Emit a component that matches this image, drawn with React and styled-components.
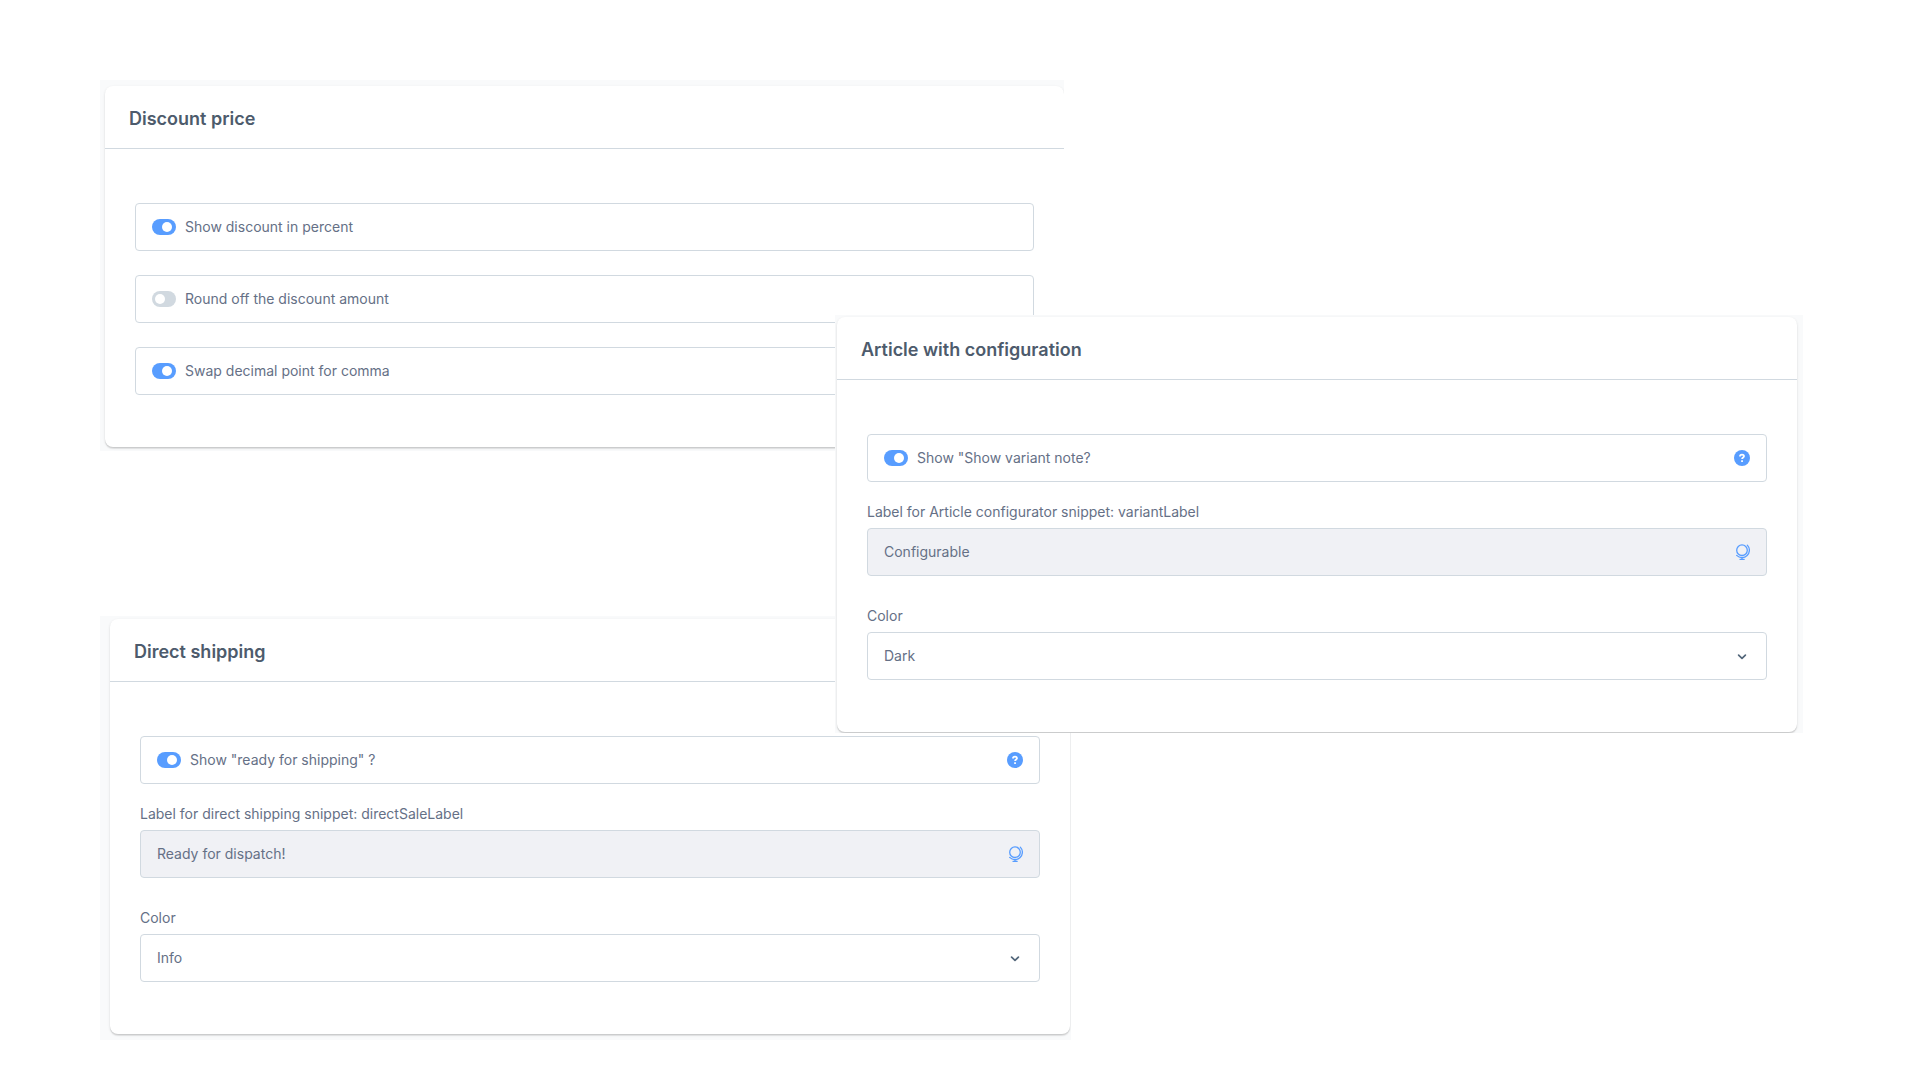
import { useId, useState } from "react";
import styled, { createGlobalStyle } from "styled-components";

const HelpIcon = () => (
  <svg width="16" height="16" viewBox="0 0 16 16" aria-hidden="true">
    <circle cx="8" cy="8" r="8" fill="#589dff" />
    <path
      d="M6 6.500C6 5.200 6.900 4.700 8 4.700s2 .6 2 1.600c0 1.300-1.900 1.300-1.900 2.700"
      fill="none"
      stroke="#fff"
      strokeWidth="1.800"
    />
    <rect x="7.100" y="10.200" width="1.900" height="1.800" rx=".4" fill="#fff" />
  </svg>
);

const GlobeIcon = () => (
  <svg
    width="16"
    height="16"
    viewBox="0 0 16 16"
    fill="none"
    stroke="#589dff"
    strokeLinecap="round"
    aria-hidden="true"
  >
    <circle cx="8" cy="6.200" r="5.300" strokeWidth="1.300" />
    <path d="M13.300 1.100a7.200 7.200 0 0 1-10.600 10.300" strokeWidth="1.300" />
    <path d="M8 13.500v1.700M6 15.300h4.200" strokeWidth="1.300" />
  </svg>
);

const ChevronIcon = () => (
  <svg
    width="16"
    height="16"
    viewBox="0 0 16 16"
    fill="none"
    stroke="#52667a"
    strokeWidth="1.700"
    strokeLinecap="round"
    strokeLinejoin="round"
    aria-hidden="true"
  >
    <path d="M4.600 7.200L8 10.400 11.400 7.200" />
  </svg>
);

const SwitchField = ({ label, defaultChecked = false, help }) => {
  const id = useId();

  return (
    <SwitchBox>
      <Toggle id={id} type="checkbox" defaultChecked={defaultChecked} />
      <SwitchLabel htmlFor={id}>{label}</SwitchLabel>
      {help && (
        <IconButton type="button" aria-label="Help">
          <HelpIcon />
        </IconButton>
      )}
    </SwitchBox>
  );
};

const SnippetField = ({ label, value }) => {
  const id = useId();

  return (
    <FormField>
      <FieldLabel htmlFor={id}>{label}</FieldLabel>
      <InputBox $disabled>
        <TextInput id={id} type="text" value={value} readOnly />
        <IconButton type="button" aria-label="Edit snippet">
          <GlobeIcon />
        </IconButton>
      </InputBox>
    </FormField>
  );
};

const SelectField = ({ label, initial, options }) => {
  const id = useId();
  const [value, setValue] = useState(initial);

  return (
    <FormField>
      <FieldLabel htmlFor={id}>{label}</FieldLabel>
      <SelectBox>
        <Select
          id={id}
          value={value}
          onChange={(e) => setValue(e.target.value)}
        >
          {options.map((option) => (
            <option key={option}>{option}</option>
          ))}
        </Select>
        <SelectArrow>
          <ChevronIcon />
        </SelectArrow>
      </SelectBox>
    </FormField>
  );
};

const Card = ({ title, children }) => (
  <CardWrapper>
    <CardHeader>
      <CardTitle>{title}</CardTitle>
    </CardHeader>
    <CardBody>{children}</CardBody>
  </CardWrapper>
);

const colors = ["Info", "Dark", "Light", "Primary"];

const App = () => {
  return (
    <>
      <GlobalStyle />
      <Board>
        <DiscountPanel>
          <Card title="Discount price">
            <SwitchField label="Show discount in percent" defaultChecked />
            <SwitchField label="Round off the discount amount" />
            <SwitchField label="Swap decimal point for comma" defaultChecked />
          </Card>
        </DiscountPanel>

        <ShippingPanel>
          <Card title="Direct shipping">
            <SwitchField
              label={'Show "ready for shipping" ?'}
              defaultChecked
              help
            />
            <SnippetField
              label="Label for direct shipping snippet: directSaleLabel"
              value="Ready for dispatch!"
            />
            <SelectField label="Color" initial="Info" options={colors} />
          </Card>
        </ShippingPanel>

        <ArticlePanel>
          <Card title="Article with configuration">
            <SwitchField
              label={'Show "Show variant note?'}
              defaultChecked
              help
            />
            <SnippetField
              label="Label for Article configurator snippet: variantLabel"
              value="Configurable"
            />
            <SelectField label="Color" initial="Dark" options={colors} />
          </Card>
        </ArticlePanel>
      </Board>
    </>
  );
};

const GlobalStyle = createGlobalStyle`
  *,
  *::before,
  *::after {
    box-sizing: border-box;
  }

  body {
    margin: 0;
    background: #fff;
    color: #657086;
    font-family: Inter, "Liberation Sans", sans-serif;
    font-size: 14px;
    line-height: 16px;
  }
`;

/* The panels share one grid row and overlap in the middle column. */
const Board = styled.main`
  display: grid;
  grid-template-columns: 100fr 735fr 236fr 732fr 117fr;
  align-items: start;
  padding-bottom: 40px;
`;

const Panel = styled.div`
  grid-row: 1;
  min-width: 0;
  overflow: hidden;
  background: #f9fafb;
`;

const DiscountPanel = styled(Panel)`
  grid-column: 2 / 4;
  margin-top: 80px;
  margin-right: 7px;
  padding: 6px 0 4px 5px;
`;

const ShippingPanel = styled(Panel)`
  grid-column: 2 / 4;
  margin-top: 616px;
  padding: 3px 1px 6px 10px;
`;

const ArticlePanel = styled(Panel)`
  grid-column: 3 / 5;
  margin-top: 315px;
  padding: 2px 6px 1px 2px;
`;

const CardWrapper = styled.section`
  border-radius: 8px;
  background: #fff;
  box-shadow:
    0 1px 1px rgba(0, 0, 0, 0.08),
    0 2px 1px rgba(0, 0, 0, 0.06),
    0 1px 3px rgba(0, 0, 0, 0.1);
`;

const CardHeader = styled.header`
  padding: 22px 24px 18px;
  border-bottom: 1px solid #d1d9e0;
`;

const CardTitle = styled.h2`
  margin: 0;
  color: #4d5b6c;
  font-size: 18px;
  font-weight: 600;
  line-height: 22px;
`;

const CardBody = styled.div`
  padding: 54px 30px 52px;
`;

const SwitchBox = styled.div`
  display: flex;
  align-items: center;
  gap: 9px;
  height: 48px;
  padding: 0 16px;
  border: 1px solid #d1d9e0;
  border-radius: 4px;

  & + & {
    margin-top: 24px;
  }
`;

const SwitchLabel = styled.label`
  flex: 1;
`;

const Toggle = styled.input`
  appearance: none;
  width: 24px;
  height: 16px;
  margin: 0;
  padding: 3px;
  border-radius: 8px;
  background: #d1d9e0;
  cursor: pointer;

  &::before {
    content: "";
    display: block;
    width: 10px;
    height: 10px;
    border-radius: 50%;
    background: #fff;
    transition: transform 0.2s ease-in-out;
  }

  &:checked {
    background: #589dff;
  }

  &:checked::before {
    transform: translateX(7px);
  }
`;

const FormField = styled.div`
  margin-top: 32px;

  ${SwitchBox} + & {
    margin-top: 22px;
  }
`;

const FieldLabel = styled.label`
  display: block;
  margin-bottom: 8px;
`;

const InputBox = styled.div`
  display: flex;
  align-items: center;
  height: 48px;
  padding-right: 16px;
  border: 1px solid #d1d9e0;
  border-radius: 4px;
  background: ${({ $disabled }) => ($disabled ? "#f0f1f5" : "#fff")};
`;

const TextInput = styled.input`
  flex: 1;
  min-width: 0;
  height: 100%;
  padding: 0 16px 1px;
  border: none;
  outline: none;
  background: transparent;
  color: inherit;
  font: inherit;
`;

const IconButton = styled.button`
  display: flex;
  padding: 0;
  border: none;
  background: none;
  cursor: pointer;
`;

const SelectBox = styled.div`
  display: grid;
  align-items: center;
`;

const Select = styled.select`
  grid-area: 1 / 1;
  appearance: none;
  width: 100%;
  height: 48px;
  padding: 0 48px 0 16px;
  border: 1px solid #d1d9e0;
  border-radius: 4px;
  background: #fff;
  color: inherit;
  font: inherit;
`;

const SelectArrow = styled.span`
  grid-area: 1 / 1;
  justify-self: end;
  display: flex;
  margin-right: 17px;
  pointer-events: none;
`;

export default App;
